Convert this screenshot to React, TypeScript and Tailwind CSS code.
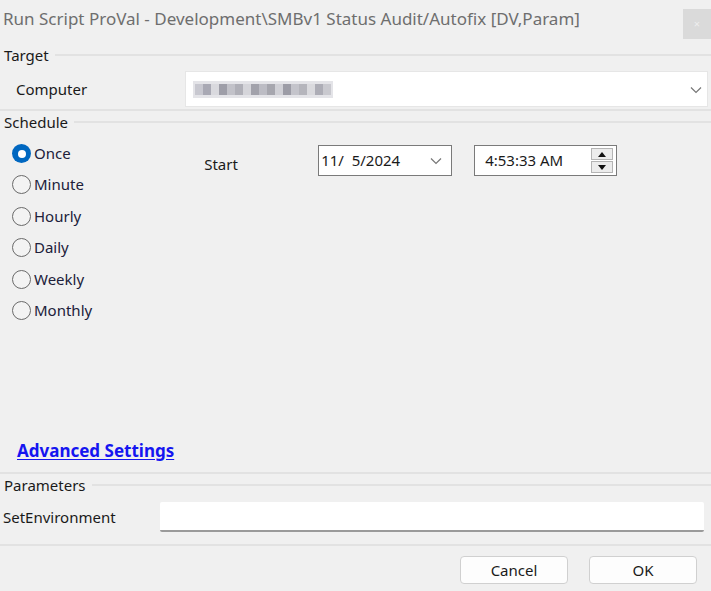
import React from 'react';

const font = { fontFamily: '"Noto Sans", "Open Sans", sans-serif' };

const GroupHeader = ({ label }: { label: string }) => (
  <div className="flex items-center h-[18px] pl-[4px]">
    <span className="text-[15px] leading-none text-[#1a1a1a]">{label}</span>
    <div className="flex-1 h-[2px] bg-[#e2e2e2] ml-[6px]" />
  </div>
);

const Radio = ({ label, checked }: { label: string; checked?: boolean }) => (
  <div className="flex items-center h-[19px]">
    {checked ? (
      <div className="w-[19px] h-[19px] rounded-full bg-[#0067c0] flex items-center justify-center">
        <div className="w-[8px] h-[8px] rounded-full bg-white" />
      </div>
    ) : (
      <div className="w-[19px] h-[19px] rounded-full border border-[#6a6a6a] bg-[#f3f3f3]" />
    )}
    <span className="ml-[3px] text-[15px] leading-none text-[#20203a]">{label}</span>
  </div>
);

const Chevron = () => (
  <svg width="12" height="8" viewBox="0 0 12 8" fill="none">
    <path d="M1 1.5 L6 6.5 L11 1.5" stroke="#777" strokeWidth="1.2" />
  </svg>
);

const blurCells = [
  'bg-[#c8c8d0]', 'bg-[#a9a9b4]', 'bg-[#d9d9de]', 'bg-[#9e9ea8]', 'bg-[#c2c2c9]', 'bg-[#b0b0b8]',
  'bg-[#d5d5da]', 'bg-[#a2a2ab]', 'bg-[#bcbcc4]', 'bg-[#a6a6ae]', 'bg-[#d0d0d6]', 'bg-[#9c9ca6]',
  'bg-[#c4c4cb]', 'bg-[#b5b5bc]', 'bg-[#dadade]', 'bg-[#adadb6]', 'bg-[#c9c9cf]',
];

const App = () => {
  return (
    <div className="w-[711px] h-[591px] bg-[#f0f0f0] overflow-hidden" style={font}>
      {/* title bar */}
      <div className="flex items-start h-[40px]">
        <div className="flex-1 pl-[3px] pt-[9px] text-[17px] leading-[20px] text-[#6e6e6e] whitespace-nowrap">
          Run Script ProVal - Development\SMBv1 Status Audit/Autofix [DV,Param]
        </div>
        <div className="w-[28px] h-[30px] mt-[9px] bg-[#dadada] flex items-center justify-center text-[#eeeeee] text-[11px]">
          ×
        </div>
      </div>

      {/* Target */}
      <div className="mt-[6px]">
        <GroupHeader label="Target" />
      </div>
      <div className="flex items-center h-[36px] mt-[7px]">
        <span className="w-[185px] pl-[16px] text-[15px] text-[#1a1a1a]">Computer</span>
        <div className="flex-1 mr-[3px] h-[36px] bg-white border border-[#e6e6e6] flex items-center">
          <div className="ml-[7px] w-[140px] h-[17px] bg-[#e4e4e8] flex items-center px-[2px]">
            {blurCells.map((c, i) => (
              <div key={i} className={`w-[8px] h-[11px] ${c}`} />
            ))}
          </div>
          <div className="flex-1" />
          <div className="mr-[5px] mt-[1px]">
            <Chevron />
          </div>
        </div>
      </div>
      <div className="h-[2px] bg-[#e2e2e2] mt-[2px]" />

      {/* Schedule */}
      <div className="mt-[2px]">
        <GroupHeader label="Schedule" />
      </div>
      <div className="flex mt-[12px] h-[296px]">
        <div className="pl-[12px] pt-[1px] flex flex-col gap-[12.4px]">
          <Radio label="Once" checked />
          <Radio label="Minute" />
          <Radio label="Hourly" />
          <Radio label="Daily" />
          <Radio label="Weekly" />
          <Radio label="Monthly" />
        </div>
        <div className="flex items-start ml-[112px] mt-[2px]">
          <span className="mt-[8px] text-[15px] text-[#1a1a1a] w-[114px]">Start</span>
          <div className="w-[134px] h-[31px] bg-white border border-[#7a7a7a] flex items-center pl-[2px]">
            <span className="text-[15px] text-[#1a1a1a] flex-1">11/&nbsp;&nbsp;5/2024</span>
            <div className="mr-[9px]">
              <Chevron />
            </div>
          </div>
          <div className="ml-[22px] w-[143px] h-[31px] bg-white border border-[#7a7a7a] flex items-center pl-[10px]">
            <span className="text-[15px] text-[#1a1a1a] flex-1">4:53:33 AM</span>
            <div className="mr-[3px] flex flex-col gap-[1px]">
              <div className="w-[22px] h-[12px] bg-[#ececec] border border-[#b4b4b4] flex items-center justify-center">
                <svg width="8" height="5" viewBox="0 0 8 5"><path d="M4 0 L8 5 L0 5 Z" fill="#111" /></svg>
              </div>
              <div className="w-[22px] h-[12px] bg-[#ececec] border border-[#b4b4b4] flex items-center justify-center">
                <svg width="8" height="5" viewBox="0 0 8 5"><path d="M0 0 L8 0 L4 5 Z" fill="#111" /></svg>
              </div>
            </div>
          </div>
        </div>
      </div>

      {/* advanced */}
      <div className="pl-[17px] h-[22px] flex items-center">
        <span className="text-[17px] font-bold text-[#1515f0] underline underline-offset-2 leading-none">
          Advanced Settings
        </span>
      </div>
      <div className="h-[2px] bg-[#e2e2e2] mt-[11px]" />

      {/* Parameters */}
      <div className="mt-[2px]">
        <GroupHeader label="Parameters" />
      </div>
      <div className="flex items-center h-[30px] mt-[8px]">
        <span className="w-[160px] pl-[3px] text-[15px] text-[#1a1a1a]">SetEnvironment</span>
        <div className="flex-1 mr-[7px] h-[30px] bg-white border-b-2 border-[#9a9a9a] rounded-[2px]" />
      </div>
      <div className="h-[2px] bg-[#e2e2e2] mt-[12px]" />

      {/* buttons */}
      <div className="flex justify-end gap-[21px] pr-[14px] mt-[10px]">
        <button className="w-[108px] h-[28px] bg-[#fdfdfd] border border-[#d0d0d0] rounded-[4px] text-[15px] text-[#1a1a1a]">
          Cancel
        </button>
        <button className="w-[108px] h-[28px] bg-[#fdfdfd] border border-[#d0d0d0] rounded-[4px] text-[15px] text-[#1a1a1a]">
          OK
        </button>
      </div>
    </div>
  );
};

export default App;
